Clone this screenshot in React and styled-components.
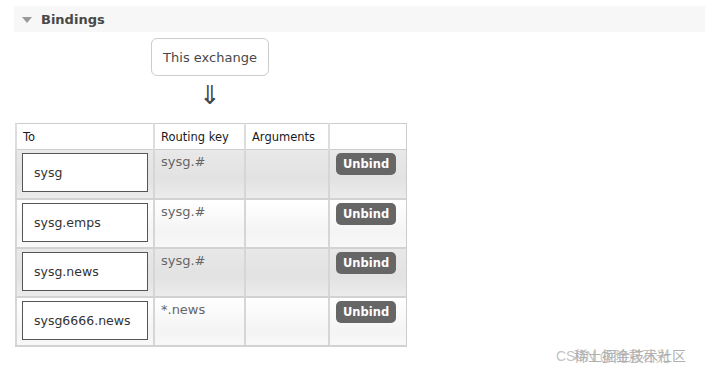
import React from 'react';
import styled, { createGlobalStyle } from 'styled-components';

const Global = createGlobalStyle`
  body {
    margin: 0;
    background: #fff;
    font-family: "DejaVu Sans", Verdana, sans-serif;
    font-size: 12px;
    color: #484848;
  }
`;

const Page = styled.div`
  position: relative;
  width: 705px;
  height: 374px;
  padding-top: 6px;
  box-sizing: border-box;
  overflow: hidden;
`;

const SectionHeader = styled.div`
  margin-left: 14px;
  height: 26px;
  display: flex;
  align-items: center;
  gap: 9px;
  padding-left: 8px;
  background: #f7f7f7;
  font-weight: bold;
  font-size: 13px;
  color: #484848;
`;

const Triangle = styled.span`
  width: 0;
  height: 0;
  border-left: 5px solid transparent;
  border-right: 5px solid transparent;
  border-top: 6px solid #999;
  margin-top: 1px;
`;

const Flow = styled.div`
  display: flex;
  flex-direction: column;
  align-items: center;
  width: 118px;
  margin-left: 151px;
  margin-top: 6px;
`;

const ExchangeBox = styled.div`
  width: 118px;
  height: 38px;
  box-sizing: border-box;
  border: 1px solid #ccc;
  border-radius: 6px;
  display: flex;
  align-items: center;
  justify-content: center;
  font-size: 13px;
  color: #484848;
`;

const Arrow = styled.div`
  margin-top: 4px;
  height: 30px;
  font-size: 26px;
  line-height: 30px;
  color: #444;
`;

const Table = styled.table`
  margin-left: 15px;
  margin-top: 13px;
  table-layout: fixed;
  width: 390px;
  border-collapse: collapse;
  border: 1px solid #ccc;
`;

const Th = styled.th`
  height: 26px;
  padding: 0 6px;
  text-align: left;
  font-weight: normal;
  font-size: 11.5px;
  color: #1a1a1a;
  border-left: 2px solid #ddd;
  border-bottom: 1px solid #ccc;
  box-sizing: border-box;
`;

const Row = styled.tr`
  td {
    background: ${p => (p.$odd
      ? 'linear-gradient(#e8e8e8, #e2e2e2 60%, #ececec)'
      : 'linear-gradient(#ffffff, #f4f4f4 70%, #f8f8f8)')};
  }
`;

const Td = styled.td`
  height: 49px;
  vertical-align: top;
  padding: 3px ${p => p.$pad ?? 6}px 0;
  border-left: 2px solid #d6d6d6;
  border-bottom: 2px solid #d2d2d2;
  box-sizing: border-box;
`;

const Target = styled.div`
  width: 126px;
  height: 39px;
  box-sizing: border-box;
  border: 1px solid #555;
  background: #fff;
  display: flex;
  align-items: center;
  padding-left: 11px;
  font-size: 12.5px;
  color: #333;
`;

const Key = styled.div`
  padding-top: 1px;
  font-size: 13px;
  color: #666;
`;

const UnbindButton = styled.button`
  height: 22px;
  padding: 0 7px;
  border: none;
  border-radius: 5px;
  background: #666;
  color: #fff;
  font-family: "DejaVu Sans", Verdana, sans-serif;
  font-weight: bold;
  font-size: 11.5px;
  cursor: pointer;
`;

const Watermark = styled.div`
  position: absolute;
  left: ${p => p.$x}px;
  top: 345px;
  font-family: "Liberation Sans", "Noto Sans CJK SC", sans-serif;
  font-size: 14px;
  color: ${p => p.$c};
  white-space: nowrap;
`;

const bindings = [
  { to: 'sysg', key: 'sysg.#' },
  { to: 'sysg.emps', key: 'sysg.#' },
  { to: 'sysg.news', key: 'sysg.#' },
  { to: 'sysg6666.news', key: '*.news' },
];

export default function App() {
  return (
    <Page>
      <Global />
      <SectionHeader>
        <Triangle />
        Bindings
      </SectionHeader>
      <Flow>
        <ExchangeBox>This exchange</ExchangeBox>
        <Arrow>⇓</Arrow>
      </Flow>
      <Table>
        <colgroup>
          <col style={{ width: 138 }} />
          <col style={{ width: 91 }} />
          <col style={{ width: 84 }} />
          <col style={{ width: 77 }} />
        </colgroup>
        <thead>
          <tr>
            <Th>To</Th>
            <Th>Routing key</Th>
            <Th>Arguments</Th>
            <Th></Th>
          </tr>
        </thead>
        <tbody>
          {bindings.map((b, i) => (
            <Row key={b.to} $odd={i % 2 === 0}>
              <Td $pad={5}><Target>{b.to}</Target></Td>
              <Td><Key>{b.key}</Key></Td>
              <Td></Td>
              <Td $pad={6}><UnbindButton>Unbind</UnbindButton></Td>
            </Row>
          ))}
        </tbody>
      </Table>
      <Watermark $x={556} $c="#c4c4c4">CSDN @随意石光</Watermark>
      <Watermark $x={574} $c="#b0b0b0">稀土掘金技术社区</Watermark>
    </Page>
  );
}
